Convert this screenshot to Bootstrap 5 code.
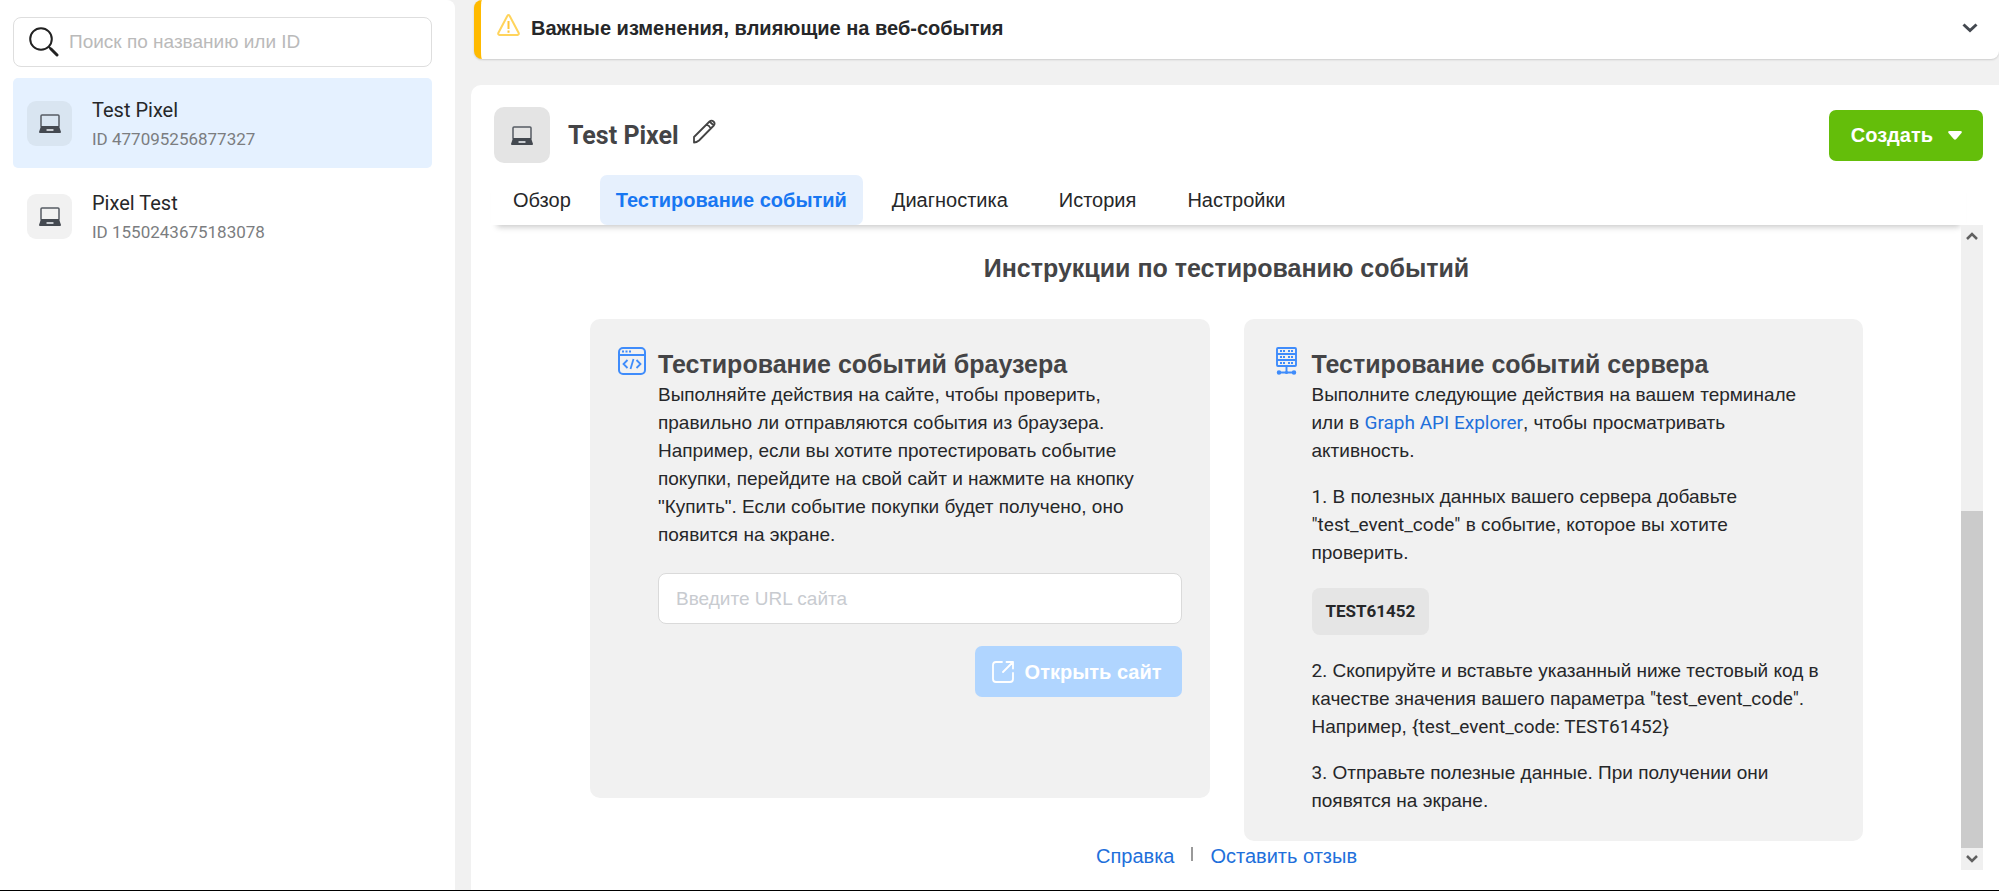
<!DOCTYPE html>
<html lang="ru">
<head>
<meta charset="utf-8">
<meta name="viewport" content="width=device-width, initial-scale=1">
<title>Events Manager</title>
<link href="https://cdn.jsdelivr.net/npm/bootstrap@5.3.0/dist/css/bootstrap.min.css" rel="stylesheet">
<style>
  :root { --ink: #262729; --head: #444446; --muted: #7b7d80; --grey: #f1f1f1; --link: #216fdb; }
  body { font: 20px/28px "Liberation Sans", Arial, sans-serif; color: var(--ink); background: var(--grey); }
  .shell { border-bottom: 1px solid #000; }
  .ltn { font-family: Roboto, sans-serif; }
  a { color: var(--link); text-decoration: none; }
  h1, h2, h3 { color: var(--head); font-size: 25px; line-height: 33px; font-weight: 700; margin: 0; }
  svg { display: block; flex: none; }

  .side { width: 455px; flex: none; background: #fff; border-top-right-radius: 8px; padding: 17px 23px 0 13px; }
  .search { height: 50px; border: 1px solid #dedede; border-radius: 8px; padding-left: 15px; gap: 8px; margin-bottom: 11px; }
  .search input, .url { font-size: 19px; color: var(--ink); }
  .search input { border: 0; outline: 0; background: none; }
  .search input::placeholder { color: #bababa; }
  .source { height: 90px; padding: 0 14px; gap: 20px; border-radius: 5px; color: var(--ink); margin-bottom: 3px; }
  .source.active { background: #e5f1ff; }
  .source small { font-size: 17px; color: var(--muted); }
  .source-text { line-height: 29px; padding-top: 4px; }
  .tile { width: 45px; height: 45px; border-radius: 9px; background: #f1f1f1; }
  .active .tile { background: #d9e5f1; }
  .tile-lg { width: 56px; height: 56px; border-radius: 10px; background: #e4e4e4; }

  .content { padding-left: 16px; min-width: 0; }
  .notice { margin-left: 3px; padding: 14px 21px 17px 16px; gap: 11px; background: #fff; border-left: 7px solid #ffba00; border-radius: 8px; border-top-right-radius: 0; box-shadow: 0 1px 2px rgba(0,0,0,.15); margin-bottom: 26px; }
  .notice button { padding: 0; border: 0; background: none; }
  .panel { background: #fff; border-top-left-radius: 10px; padding: 22px 16px 20px 20px; }
  .panel-head { padding-left: 3px; gap: 18px; margin-bottom: 12px; }
  .create { height: 51px; padding: 0 21px 0 22px; gap: 15px; border-radius: 7px; }
  .create, .create:hover { background: #64be0a; color: #fff; }
  .btn { font-size: 20px; font-weight: 700; border: 0; }
  .tabs { gap: 7px; margin-right: 17px; box-shadow: 0 8px 6px -6px rgba(0,0,0,.22); }
  .tabs a { height: 50px; padding: 11px 22px; color: var(--ink); border-radius: 7px; }
  .tabs a.active { padding: 11px 16px; color: #1877f2; background: #e6f0fd; font-weight: 700; }

  .pane { padding: 27px 98px 0 99px; min-width: 0; }
  .guides { display: grid; grid-template-columns: 1fr 1fr; gap: 34px; margin-top: 34px; font-size: 19px; }
  .guide { min-width: 0; background: var(--grey); border-radius: 10px; padding: 28px 28px 26px; gap: 12px; }
  .guide h3 { line-height: 34px; }
  .guide-server { padding-right: 38px; }
  .guide-browser { min-height: 479px; }
  .guide-body { flex: 1 1 0; min-width: 0; }
  .guide p { margin: 0 0 18px; }
  .url { height: 51px; padding: 0 17px; border: 1px solid #dadada; border-radius: 8px; margin: 24px 0 22px; }
  .url::placeholder { color: #c8cbd0; }
  .open, .open:disabled { height: 51px; padding: 0 20px 0 17px; gap: 11px; border-radius: 7px; background: #b0d5ff; color: #fff; opacity: 1; }
  .code { height: 47px; line-height: 47px; padding: 0 14px; border-radius: 8px; background: #e5e5e5; font-size: 17px; font-weight: 700; margin: 3px 0 22px; }
  .foot { gap: 17px; margin-top: 1px; }
  .bar { width: 2px; height: 14px; background: #999; margin-top: 5px; }

  .scroller { width: 22px; flex: none; background: #f0f0f0; }
  .scroller .gap { flex: 264 0 0; }
  .scroller .thumb { flex: 336 0 0; background: #cbcbcb; }
  .scroller svg { margin: 7px auto; }
</style>
</head>
<body>
<svg class="d-none" aria-hidden="true">
  <symbol id="laptop" viewBox="0 0 22 19">
    <rect x="2" y="1" width="18" height="12" rx="1" fill="none" stroke="#555b63" stroke-width="1.5"/>
    <path d="M2 12h18l2 6q0 1-1 1H1q-1 0-1-1z" fill="#444950"/>
    <rect x="7.500" y="15" width="7" height="2" rx=".5" fill="#c9cdd2"/>
  </symbol>
</svg>
<div class="shell d-flex min-vh-100">
  <aside class="side">
    <label class="search d-flex align-items-center">
      <svg width="30" height="30" viewBox="0 0 30 30" fill="none" stroke="#222" stroke-linecap="round"><circle cx="12" cy="12" r="10.800" stroke-width="2"/><path d="M20 20l2 2" stroke-width="2"/><path d="M22 22l6 6" stroke-width="3"/></svg>
      <input class="flex-fill" type="search" placeholder="Поиск по названию или ID" aria-label="Поиск по названию или ID">
    </label>
    <nav class="ltn">
      <a class="source active d-flex align-items-center" href="#"><span class="tile d-flex align-items-center justify-content-center"><svg width="22" height="19"><use href="#laptop"/></svg></span><span class="source-text">Test Pixel<small class="d-block">ID 477095256877327</small></span></a>
      <a class="source d-flex align-items-center" href="#"><span class="tile d-flex align-items-center justify-content-center"><svg width="22" height="19"><use href="#laptop"/></svg></span><span class="source-text">Pixel Test<small class="d-block">ID 1550243675183078</small></span></a>
    </nav>
  </aside>

  <main class="content flex-fill d-flex flex-column">
    <div class="notice d-flex align-items-center">
      <svg class="align-self-start" width="23" height="22" viewBox="0 0 23 22" fill="none" stroke="#ffd45c" stroke-width="2" stroke-linejoin="round"><path d="M10.300 2q1.200-1.800 2.400 0l9 17q.5 1.700-1.200 2h-18q-1.700-.3-1.200-2z"/><path d="M11.500 7v8M11.500 16.500v2.200" stroke="#ffc53a"/></svg>
      <strong class="flex-fill">Важные изменения, влияющие на веб-события</strong>
      <button type="button" aria-label="Развернуть"><svg width="16" height="10" viewBox="0 0 16 10" fill="none" stroke="#444950" stroke-width="3"><path d="M1.500 1.500L8 7.500l6.500-6"/></svg></button>
    </div>

    <section class="panel flex-fill d-flex flex-column">
      <header class="panel-head d-flex align-items-center">
        <span class="tile-lg d-flex align-items-center justify-content-center"><svg width="22" height="19"><use href="#laptop"/></svg></span>
        <div class="d-flex flex-fill gap-2">
          <h1 class="ltn">Test Pixel</h1>
          <svg class="ms-1" width="26" height="25" viewBox="0 0 26 25" fill="none" stroke="#444" stroke-width="1.800" stroke-linejoin="round"><path d="M3 23.500v-5.500L18.500 2.500q2-1.700 4 0t.3 4L8 21.500q-2.500 2-5 2zM15.500 5.500q3 1 4.500 4.500M18.500 2.500l4.300 4"/></svg>
        </div>
        <button type="button" class="btn create d-flex align-items-center">Создать <svg width="14" height="9" viewBox="0 0 14 9" fill="#fff"><path d="M1.500 0h11q2 .3 1 2L8.300 8q-1.300 1.300-2.600 0L.5 2q-1-1.700 1-2z"/></svg></button>
      </header>
      <nav class="tabs d-flex">
        <a href="#">Обзор</a><a class="active" href="#" aria-current="page">Тестирование событий</a><a href="#">Диагностика</a><a href="#">История</a><a href="#">Настройки</a>
      </nav>
      <div class="d-flex flex-fill">
        <div class="pane flex-fill">
          <h2 class="text-center">Инструкции по тестированию событий</h2>
          <div class="guides align-items-start">
            <article class="guide guide-browser d-flex">
              <svg width="28" height="28" viewBox="0 0 28 28" fill="none" stroke="#3f8cfb" stroke-width="2"><rect x="1" y="1" width="26" height="26" rx="4"/><path d="M1 8h26"/><path d="M4 4.500h2M7.500 4.500h2M11 4.500h2"/><path d="M9.500 13L5.500 17l4 4M18.500 13l4 4-4 4M15.500 12l-3 10" stroke-width="1.800"/></svg>
              <div class="guide-body">
                <h3>Тестирование событий браузера</h3>
                Выполняйте действия на сайте, чтобы проверить, правильно ли отправляются события из браузера. Например, если вы хотите протестировать событие покупки, перейдите на свой сайт и нажмите на кнопку "Купить". Если событие покупки будет получено, оно появится на экране.
                <input class="url d-block w-100" type="url" placeholder="Введите URL сайта" aria-label="Введите URL сайта">
                <button type="button" class="btn open d-flex align-items-center ms-auto" disabled><svg width="22" height="22" viewBox="0 0 22 22" fill="none" stroke="#fff" stroke-width="1.800" stroke-linecap="round" stroke-linejoin="round"><path d="M10 1H4Q1 1 1 4v14q0 3 3 3h14q3 0 3-3v-6M14.500 1H21v6.500M21 1L11 11"/></svg>Открыть сайт</button>
              </div>
            </article>
            <article class="guide guide-server d-flex">
              <svg width="28" height="28" viewBox="0 0 28 28" fill="none" stroke="#3f8cfb" stroke-width="1.900"><rect x="5" y="1" width="19" height="18" rx="1"/><path d="M5 7h19M5 13h19"/><path d="M8 4h5M16 4h5M8 10h5M16 10h5M8 16h5M16 16h5" stroke-width="2" stroke-dasharray="2 1"/><path d="M14.500 19v6.500M7 25.500h15"/><g fill="#3f8cfb"><circle cx="7" cy="25.500" r="1.300"/><circle cx="14.500" cy="25.500" r=".6"/><circle cx="22" cy="25.500" r="1.300"/></g></svg>
              <div class="guide-body">
                <h3>Тестирование событий сервера</h3>
                <p>Выполните следующие действия на вашем терминале или в <a class="ltn" href="#">Graph API Explorer</a>, чтобы просматривать активность.</p>
                <p><span class="ltn">1.</span> В полезных данных вашего сервера добавьте <span class="ltn">"test_event_code"</span> в событие, которое вы хотите проверить.</p>
                <div class="d-flex"><span class="code ltn">TEST61452</span></div>
                <p><span class="ltn">2.</span> Скопируйте и вставьте указанный ниже тестовый код в качестве значения вашего параметра <span class="ltn">"test_event_code".</span> Например, <span class="ltn">{test_event_code: TEST61452}</span></p>
                <p class="mb-0"><span class="ltn">3.</span> Отправьте полезные данные. При получении они появятся на экране.</p>
              </div>
            </article>
          </div>
          <footer class="foot d-flex justify-content-center"><a href="#">Справка</a><span class="bar"></span><a href="#">Оставить отзыв</a></footer>
        </div>
        <div class="scroller d-flex flex-column" aria-hidden="true">
          <svg width="12" height="8" viewBox="0 0 12 8" fill="none" stroke="#606060" stroke-width="2.500"><path d="M1 7l5-5 5 5"/></svg>
          <span class="gap"></span><span class="thumb"></span>
          <svg width="12" height="8" viewBox="0 0 12 8" fill="none" stroke="#606060" stroke-width="2.500"><path d="M1 1l5 5 5-5"/></svg>
        </div>
      </div>
    </section>
  </main>
</div>
<script src="https://cdn.jsdelivr.net/npm/bootstrap@5.3.0/dist/js/bootstrap.bundle.min.js"></script>
</body>
</html>
